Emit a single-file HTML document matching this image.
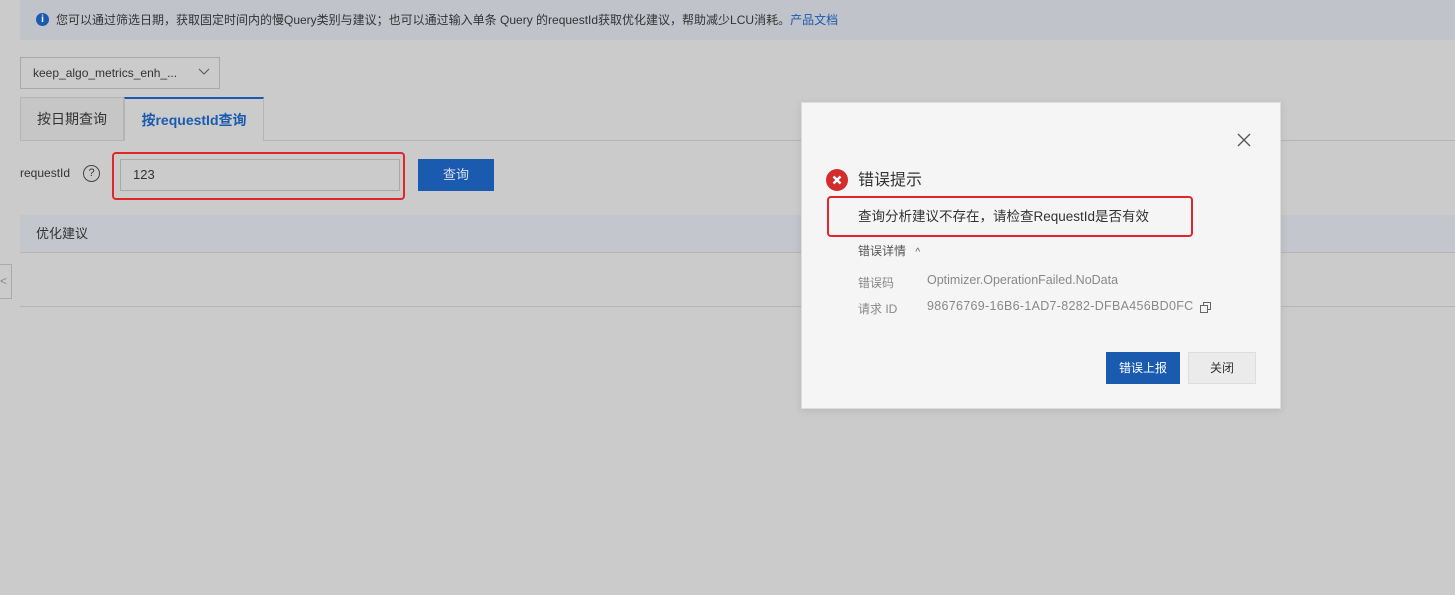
<!DOCTYPE html>
<html><head><meta charset="utf-8"><style>
body{margin:0;width:1455px;height:595px;background:#cbcbcb;font-family:"Liberation Sans","Noto Sans CJK SC",sans-serif;position:relative;overflow:hidden;color:#333}
.a{position:absolute}
</style></head><body>
<div class="a" style="left:20px;top:0;width:1435px;height:40px;background:#c0c3c9"></div>
<div class="a" style="left:36px;top:13px;width:13px;height:13px;border-radius:50%;background:#1a5bb0;color:#fff;font-size:10px;font-weight:bold;text-align:center;line-height:13px">i</div>
<div class="a" style="left:56px;top:11px;font-size:12px;color:#333">您可以通过筛选日期，获取固定时间内的慢Query类别与建议；也可以通过输入单条 Query 的requestId获取优化建议，帮助减少LCU消耗。<span style="color:#1a5bb0">产品文档</span></div>
<div class="a" style="left:20px;top:57px;width:200px;height:32px;border:1px solid #a8a8a8;box-sizing:border-box;font-size:12px;line-height:30px;padding-left:12px">keep_algo_metrics_enh_...</div>
<svg class="a" style="left:198px;top:68px" width="12" height="8"><path d="M1 1l5 5 5-5" stroke="#555" fill="none"/></svg>
<div class="a" style="left:20px;top:140px;width:1435px;height:1px;background:#b5b5b5"></div>
<div class="a" style="left:20px;top:97px;width:104px;height:44px;border:1px solid #b5b5b5;box-sizing:border-box;background:#c6c6c6;font-size:14px;line-height:42px;text-align:center;color:#333">按日期查询</div>
<div class="a" style="left:124px;top:97px;width:140px;height:44px;border:1px solid #b5b5b5;border-top:2px solid #1a5bb0;border-bottom:none;box-sizing:border-box;background:#cbcbcb;font-size:14px;line-height:42px;text-align:center;color:#1a5bb0;font-weight:bold">按requestId查询</div>
<div class="a" style="left:20px;top:166px;font-size:12px">requestId</div>
<div class="a" style="left:83px;top:165px;width:15px;height:15px;border:1.5px solid #444;border-radius:50%;font-size:11px;text-align:center;line-height:15px">?</div>
<div class="a" style="left:112px;top:152px;width:293px;height:48px;border:2px solid #e0262a;border-radius:4px;box-sizing:border-box"></div>
<div class="a" style="left:120px;top:159px;width:280px;height:32px;border:1px solid #a8a8a8;box-sizing:border-box;font-size:13px;line-height:30px;padding-left:12px">123</div>
<div class="a" style="left:418px;top:159px;width:76px;height:32px;background:#1a5bb0;color:#dde;font-size:13px;line-height:32px;text-align:center">查询</div>
<div class="a" style="left:20px;top:215px;width:1435px;height:38px;background:#c3c6cc;border-bottom:1px solid #b5b5b5;font-size:13px;line-height:38px;padding-left:16px;box-sizing:border-box">优化建议</div>
<div class="a" style="left:20px;top:306px;width:1435px;height:1px;background:#b5b5b5"></div>
<div class="a" style="left:-1px;top:264px;width:11px;height:33px;border:1px solid #aaa;background:#cbcbcb;color:#888;font-size:12px;line-height:33px">&lt;</div>
<div class="a" style="left:801px;top:102px;width:480px;height:307px;background:#f5f5f5;border:1px solid #ddd;box-sizing:border-box;box-shadow:0 2px 8px rgba(0,0,0,.1)"></div>
<svg class="a" style="left:1237px;top:133px" width="14" height="14"><path d="M1 1l12 12M13 1L1 13" stroke="#555" stroke-width="1.3"/></svg>
<div class="a" style="left:826px;top:169px;width:22px;height:22px;border-radius:50%;background:#d22c2c"></div>
<svg class="a" style="left:826px;top:169px" width="22" height="22"><path d="M7.5 7.5l7 7M14.5 7.5l-7 7" stroke="#fff" stroke-width="2.4"/></svg>
<div class="a" style="left:858px;top:170px;font-size:16px;color:#333;line-height:22px">错误提示</div>
<div class="a" style="left:827px;top:196px;width:366px;height:41px;border:2px solid #e0262a;border-radius:4px;box-sizing:border-box"></div>
<div class="a" style="left:858px;top:205px;font-size:13.5px;color:#333">查询分析建议不存在，请检查RequestId是否有效</div>
<div class="a" style="left:858px;top:242px;font-size:12px;color:#555">错误详情 <span style="margin-left:6px;font-size:10px">^</span></div>
<div class="a" style="left:858px;top:274px;font-size:12px;color:#888">错误码</div>
<div class="a" style="left:927px;top:273px;font-size:12.5px;color:#888">Optimizer.OperationFailed.NoData</div>
<div class="a" style="left:858px;top:300px;font-size:12px;color:#888">请求 ID</div>
<div class="a" style="left:927px;top:299px;font-size:12.5px;color:#888;letter-spacing:0.3px">98676769-16B6-1AD7-8282-DFBA456BD0FC</div>
<svg class="a" style="left:1200px;top:302px" width="11" height="11"><rect x="0.5" y="3.5" width="7" height="7" fill="none" stroke="#666"/><path d="M3.5 3V.5h7v7H8" fill="none" stroke="#666"/></svg>
<div class="a" style="left:1106px;top:352px;width:74px;height:32px;background:#1a5bb0;color:#fff;font-size:12px;line-height:32px;text-align:center">错误上报</div>
<div class="a" style="left:1188px;top:352px;width:68px;height:32px;background:#ebebeb;border:1px solid #ddd;box-sizing:border-box;font-size:12px;line-height:30px;text-align:center;color:#333">关闭</div>
</body></html>
